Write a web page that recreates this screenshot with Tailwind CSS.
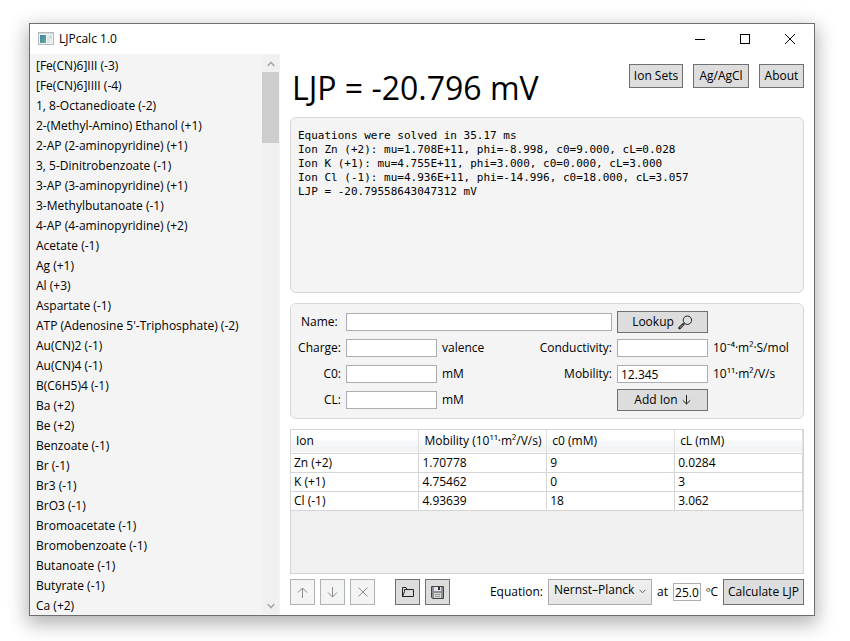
<!DOCTYPE html>
<html lang="en">
<head>
<meta charset="utf-8">
<meta name="viewport" content="width=device-width, initial-scale=1">
<title>LJPcalc 1.0</title>
<script src="https://cdn.jsdelivr.net/npm/@tailwindcss/browser@4"></script>
</head>
<body class="h-screen bg-white pt-[23px] pr-[35px] pb-[25px] pl-[29px] font-['Open_Sans','Noto_Sans',sans-serif] text-[12px] leading-4 text-black">
<div class="flex h-full flex-col border border-[#6e6e6e] bg-white shadow-[0_6px_18px_2px_rgba(0,0,0,0.3)]">
  <header class="flex h-[30px] shrink-0 items-center pr-px pb-px pl-2">
    <svg class="mr-[5px] h-4 w-4" viewBox="0 0 16 16" aria-hidden="true">
      <defs><linearGradient id="pane" x1="0" y1="0" x2="1" y2="1"><stop offset="0" stop-color="#3f7fae"/><stop offset="1" stop-color="#5fb48c"/></linearGradient></defs>
      <rect x="0.5" y="1.5" width="15" height="12" fill="#f4f5f6" stroke="#b4b9bd"/>
      <rect x="1" y="2" width="14" height="1" fill="#d5dade"/>
      <rect x="2" y="4" width="6" height="8" fill="url(#pane)"/>
      <rect x="9" y="4" width="3" height="8" fill="#e2e4e4"/>
      <rect x="12" y="4" width="2" height="4" fill="#c4dfd6"/>
      <rect x="13" y="8" width="1" height="4" fill="#e2e4e4"/>
    </svg>
    <h1 class="flex-1">LJPcalc 1.0</h1>
    <button class="flex h-full w-[46px] items-center justify-center" aria-label="Minimize"><svg class="h-[10px] w-[10px]" viewBox="0 0 10 10"><path d="M0 5.5H10" stroke="#000"/></svg></button>
    <button class="flex h-full w-[44px] items-center justify-center" aria-label="Maximize"><svg class="h-[10px] w-[10px]" viewBox="0 0 10 10"><rect x=".5" y=".5" width="9" height="9" fill="none" stroke="#000"/></svg></button>
    <button class="flex h-full w-[46px] items-center justify-center" aria-label="Close"><svg class="h-[10px] w-[10px]" viewBox="0 0 10 10"><path d="M0 0L10 10M10 0L0 10" stroke="#000"/></svg></button>
  </header>
  <div class="flex min-h-0 flex-1">
    <aside class="flex w-[250px] shrink-0 bg-[#f4f4f4]">
      <ul class="min-w-0 flex-1 overflow-hidden pt-[2px] pl-[6px] leading-5 whitespace-nowrap">
        <li>[Fe(CN)6]III (-3)</li>
        <li>[Fe(CN)6]IIII (-4)</li>
        <li>1, 8-Octanedioate (-2)</li>
        <li>2-(Methyl-Amino) Ethanol (+1)</li>
        <li>2-AP (2-aminopyridine) (+1)</li>
        <li>3, 5-Dinitrobenzoate (-1)</li>
        <li>3-AP (3-aminopyridine) (+1)</li>
        <li>3-Methylbutanoate (-1)</li>
        <li>4-AP (4-aminopyridine) (+2)</li>
        <li>Acetate (-1)</li>
        <li>Ag (+1)</li>
        <li>Al (+3)</li>
        <li>Aspartate (-1)</li>
        <li>ATP (Adenosine 5'-Triphosphate) (-2)</li>
        <li>Au(CN)2 (-1)</li>
        <li>Au(CN)4 (-1)</li>
        <li>B(C6H5)4 (-1)</li>
        <li>Ba (+2)</li>
        <li>Be (+2)</li>
        <li>Benzoate (-1)</li>
        <li>Br (-1)</li>
        <li>Br3 (-1)</li>
        <li>BrO3 (-1)</li>
        <li>Bromoacetate (-1)</li>
        <li>Bromobenzoate (-1)</li>
        <li>Butanoate (-1)</li>
        <li>Butyrate (-1)</li>
        <li>Ca (+2)</li>
      </ul>
      <div class="my-px mr-px flex w-[17px] shrink-0 flex-col bg-[#f0f0f0]">
        <button class="flex h-[17px] items-center justify-center" aria-label="Scroll up"><svg class="h-[6px] w-2" viewBox="0 0 8 6"><path d="M.7 5L4 1.2L7.3 5" fill="none" stroke="#a3a3a3" stroke-width="1.4"/></svg></button>
        <div class="h-[71px] bg-[#cdcdcd]"></div>
        <div class="flex-1"></div>
        <button class="flex h-[17px] items-center justify-center" aria-label="Scroll down"><svg class="h-[6px] w-2" viewBox="0 0 8 6"><path d="M.7 1L4 4.8L7.3 1" fill="none" stroke="#a3a3a3" stroke-width="1.4"/></svg></button>
      </div>
    </aside>

    <main class="flex min-w-0 flex-1 flex-col p-[10px]">
      <div class="flex h-[53px] shrink-0 items-start gap-[10px]">
        <h2 class="flex-1 pl-[2px] text-[32px] leading-[48px] whitespace-nowrap">LJP = -20.796 mV</h2>
        <button class="h-6 w-[54px] border border-[#707070] bg-[#dddddd]">Ion Sets</button>
        <button class="h-6 w-[56px] border border-[#707070] bg-[#dddddd]">Ag/AgCl</button>
        <button class="h-6 w-[45px] border border-[#707070] bg-[#dddddd]">About</button>
      </div>

      <pre class="min-h-0 flex-[14] overflow-hidden rounded-md border border-[#d8d8d8] bg-[#f4f4f4] px-[7px] pt-[11px] pb-[9px] font-['DejaVu_Sans_Mono',monospace] text-[11px] leading-[14px]">Equations were solved in 35.17 ms
Ion Zn (+2): mu=1.708E+11, phi=-8.998, c0=9.000, cL=0.028
Ion K (+1): mu=4.755E+11, phi=3.000, c0=0.000, cL=3.000
Ion Cl (-1): mu=4.936E+11, phi=-14.996, c0=18.000, cL=3.057
LJP = -20.79558643047312 mV</pre>

      <form class="my-[10px] grid shrink-0 auto-rows-[26px] grid-cols-[40px_91px_auto_1fr_91px_85px] items-center gap-x-[5px] rounded-md border border-[#d8d8d8] bg-[#f4f4f4] py-[5px] pr-[5px] pl-[10px] whitespace-nowrap">
        <label for="name">Name:</label>
        <input id="name" class="col-span-3 h-[18px] border border-[#abadb3] bg-white px-[3px]">
        <button type="button" class="flex h-[22px] items-center justify-center gap-1 border border-[#707070] bg-[#dddddd]">Lookup
          <svg class="h-[15px] w-[15px]" viewBox="0 0 15 15" fill="none" stroke="#222" aria-hidden="true"><circle cx="9.4" cy="5.2" r="4.2"/><path d="M6.4 8.2L5.2 9.4"/><path d="M5.2 9.4L1.6 13" stroke-width="2.6" stroke-linecap="round"/><path d="M5 9.7L1.8 12.9" stroke="#ddd" stroke-width=".8"/></svg>
        </button>
        <span></span>

        <label for="charge" class="justify-self-end">Charge:</label>
        <input id="charge" class="h-[18px] border border-[#abadb3] bg-white px-[3px]">
        <span>valence</span>
        <label for="cond" class="justify-self-end">Conductivity:</label>
        <input id="cond" class="h-[18px] border border-[#abadb3] bg-white px-[3px]">
        <span>10⁻⁴·m²·S/mol</span>

        <label for="c0" class="justify-self-end">C0:</label>
        <input id="c0" class="h-[18px] border border-[#abadb3] bg-white px-[3px]">
        <span>mM</span>
        <label for="mob" class="justify-self-end">Mobility:</label>
        <input id="mob" value="12.345" class="h-[18px] border border-[#abadb3] bg-white px-[3px]">
        <span>10¹¹·m²/V/s</span>

        <label for="cl" class="justify-self-end">CL:</label>
        <input id="cl" class="h-[18px] border border-[#abadb3] bg-white px-[3px]">
        <span>mM</span>
        <span></span>
        <button type="button" class="flex h-[22px] items-center justify-center gap-1 border border-[#707070] bg-[#dddddd]">Add Ion
          <svg class="h-[10px] w-[9px]" viewBox="0 0 9 10" fill="none" stroke="#222" aria-hidden="true"><path d="M4.5 0V9M.7 5.3L4.5 9L8.3 5.3"/></svg>
        </button>
      </form>

      <div class="min-h-0 flex-[13] overflow-hidden border border-[#d5d5d5] bg-[#f0f0f0]">
        <table class="w-full table-fixed border-collapse bg-white text-left whitespace-nowrap">
          <thead>
            <tr class="h-[23px] border-b border-[#d5d5d5] bg-linear-to-b from-white from-45% via-[#f7f8fa] via-50% to-[#f1f2f4]">
              <th class="border-r border-[#dedfe1] pl-[5px] font-normal">Ion</th>
              <th class="border-r border-[#dedfe1] pl-[5px] font-normal">Mobility (10¹¹·m²/V/s)</th>
              <th class="border-r border-[#dedfe1] pl-[5px] font-normal">c0 (mM)</th>
              <th class="border-r border-[#dedfe1] pl-[5px] font-normal">cL (mM)</th>
            </tr>
          </thead>
          <tbody>
            <tr class="h-[19px] border-b border-[#d5d5d5]"><td class="border-r border-[#d5d5d5] pl-[3px]">Zn (+2)</td><td class="border-r border-[#d5d5d5] pl-[3px]">1.70778</td><td class="border-r border-[#d5d5d5] pl-[3px]">9</td><td class="border-r border-[#d5d5d5] pl-[3px]">0.0284</td></tr>
            <tr class="h-[19px] border-b border-[#d5d5d5]"><td class="border-r border-[#d5d5d5] pl-[3px]">K (+1)</td><td class="border-r border-[#d5d5d5] pl-[3px]">4.75462</td><td class="border-r border-[#d5d5d5] pl-[3px]">0</td><td class="border-r border-[#d5d5d5] pl-[3px]">3</td></tr>
            <tr class="h-[19px] border-b border-[#d5d5d5]"><td class="border-r border-[#d5d5d5] pl-[3px]">Cl (-1)</td><td class="border-r border-[#d5d5d5] pl-[3px]">4.93639</td><td class="border-r border-[#d5d5d5] pl-[3px]">18</td><td class="border-r border-[#d5d5d5] pl-[3px]">3.062</td></tr>
          </tbody>
        </table>
      </div>

      <div class="mt-[5px] flex h-[26px] shrink-0 items-center gap-[5px] whitespace-nowrap">
        <button disabled class="flex h-full w-[25px] items-center justify-center border border-[#adb2b5] bg-[#f4f4f4]" aria-label="Move up"><svg class="h-[11px] w-[11px]" viewBox="0 0 11 11" fill="none" stroke="#8a8a8a"><path d="M5.5 11V1M1 5.5L5.5 1L10 5.5"/></svg></button>
        <button disabled class="flex h-full w-[25px] items-center justify-center border border-[#adb2b5] bg-[#f4f4f4]" aria-label="Move down"><svg class="h-[11px] w-[11px]" viewBox="0 0 11 11" fill="none" stroke="#8a8a8a"><path d="M5.5 0V10M1 5.5L5.5 10L10 5.5"/></svg></button>
        <button disabled class="flex h-full w-[25px] items-center justify-center border border-[#adb2b5] bg-[#f4f4f4]" aria-label="Remove"><svg class="h-[10px] w-[10px]" viewBox="0 0 10 10" fill="none" stroke="#8a8a8a"><path d="M.5 .5L9.5 9.5M9.5 .5L.5 9.5"/></svg></button>
        <button class="ml-[15px] flex h-full w-[25px] items-center justify-center border border-[#707070] bg-[#dddddd]" aria-label="Open"><svg class="h-3 w-[13px]" viewBox="0 0 13 12" fill="none" stroke="#222"><path d="M1.5 10.5V1.5H5L6 3.5H12.5V10.5H1.5L3.5 5.5V3.5H6"/></svg></button>
        <button class="flex h-full w-[25px] items-center justify-center border border-[#707070] bg-[#dddddd]" aria-label="Save"><svg class="h-[13px] w-[13px]" viewBox="0 0 13 13"><path d="M.5 .5H12.5V12.5H1.5L.5 11.5Z" fill="#8d8f98" stroke="#444"/><rect x="3" y="1" width="7" height="4" fill="#e4e4ea"/><rect x="7" y="1" width="2" height="3" fill="#333"/><rect x="3" y="7" width="7" height="5" fill="#d6d9d0"/><path d="M4 8.5H9M4 10.5H9" stroke="#999"/></svg></button>
        <span class="flex-1"></span>
        <label for="eq">Equation:</label>
        <div class="relative h-full w-[104px]">
          <select id="eq" class="block h-full w-full appearance-none border border-[#acacac] bg-linear-to-b from-[#f0f0f0] to-[#e5e5e5] pb-1 pl-[5px]"><option>Nernst–Planck</option></select>
          <svg class="pointer-events-none absolute top-[10px] right-[6px] h-[5px] w-[7px]" viewBox="0 0 7 5" fill="none" stroke="#606060"><path d="M.5 .8L3.5 3.8L6.5 .8"/></svg>
        </div>
        <label for="temp">at</label>
        <input id="temp" value="25.0" class="h-[18px] w-7 border border-[#abadb3] bg-white px-0 text-center">
        <span>ºC</span>
        <button class="h-full w-[81px] border border-[#707070] bg-[#dddddd]">Calculate LJP</button>
      </div>
    </main>
  </div>
</div>
</body>
</html>
